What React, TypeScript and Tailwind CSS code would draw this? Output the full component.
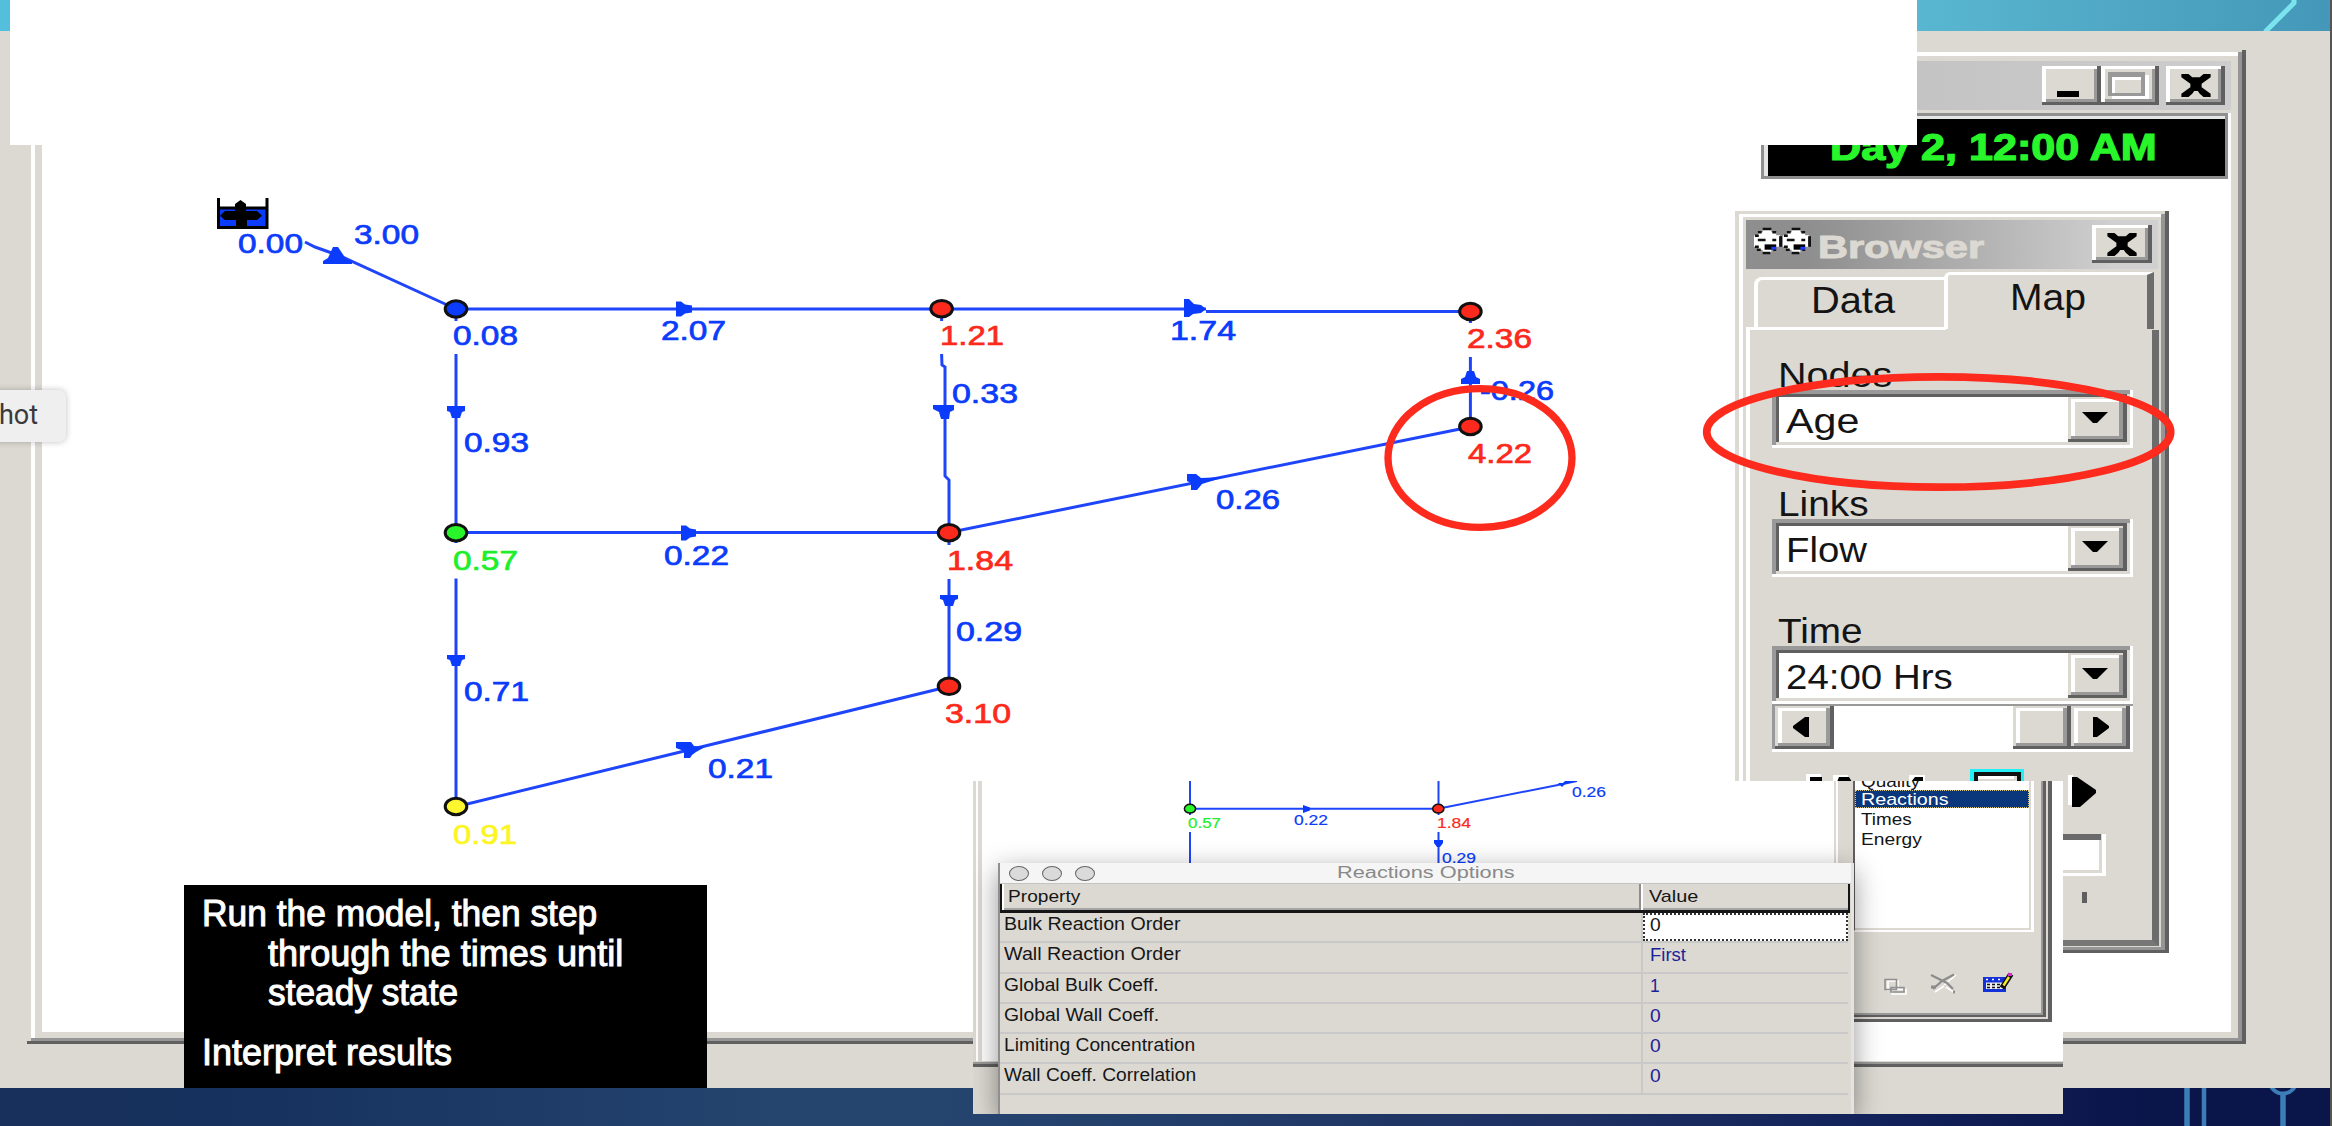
import { useLayoutEffect, useRef, type ReactNode } from "react";

/* One line of text, squeezed or stretched to a set width. */
function Fit({ w, className = "", children }: { w: number; className?: string; children: ReactNode }) {
  const ref = useRef<HTMLSpanElement>(null);
  useLayoutEffect(() => {
    const el = ref.current;
    if (el && el.offsetWidth) el.style.transform = `scaleX(${w / el.offsetWidth})`;
  }, [w]);
  return (
    <span ref={ref} className={`block w-max origin-top-left whitespace-pre leading-none ${className}`}>
      {children}
    </span>
  );
}

const RAISED =
  "bg-[#dcd9d2] shadow-[inset_-4px_-3px_0_#606060,inset_4px_3px_0_#ffffff,inset_-7px_-6px_0_#999999]";
const RAISED_BTN =
  "bg-[#dcd9d2] shadow-[inset_-4px_-3px_0_#606060,inset_3px_2px_0_#dcd9d2,inset_-8px_-6px_0_#999999,inset_7px_5px_0_#ffffff]";

function CloseGlyph() {
  return (
    <svg className="h-[23px] w-[30px]" viewBox="0 0 8 7" preserveAspectRatio="none">
      <path
        d="M0.100 0H2L3 1H5L6 0H7.900V1L6.700 2L5.500 3V4L6.700 5L7.900 6V7H6L5 6L4.500 5.200H3.500L3 6L2 7H0.100V6L1.300 5L2.500 4V3L1.300 2L0.100 1Z"
        fill="#000"
      />
    </svg>
  );
}

const BLUE = "#0b3bfb";
const RED = "#fb2a1c";

type Lbl = [string, number, number, number, string];
function Labels({ items, size, sw }: { items: Lbl[]; size: number; sw: number }) {
  return (
    <g fontFamily='"Liberation Sans", sans-serif' fontSize={size}>
      {items.map(([t, x, y, w, c], i) => (
        <text key={i} x={x} y={y} textLength={w} lengthAdjust="spacingAndGlyphs" fill={c} stroke={c} strokeWidth={sw}>
          {t}
        </text>
      ))}
    </g>
  );
}

function NodeDot({ x, y, c }: { x: number; y: number; c: string }) {
  return <ellipse cx={x} cy={y} rx={10.8} ry={8.2} fill={c} stroke="#111" strokeWidth={3} />;
}

const MAP_LABELS: Lbl[] = [
  ["0.00", 238, 252.5, 65, BLUE],
  ["3.00", 354, 244, 65, BLUE],
  ["0.08", 453, 345.2, 65, BLUE],
  ["2.07", 661, 339.7, 65, BLUE],
  ["1.21", 940, 345.2, 64, RED],
  ["1.74", 1170, 339.7, 66, BLUE],
  ["2.36", 1467, 347.8, 65, RED],
  ["0.93", 464, 451.8, 65, BLUE],
  ["0.33", 952, 402.8, 66, BLUE],
  ["-0.26", 1480, 399.8, 74, BLUE],
  ["4.22", 1468, 463, 64, RED],
  ["0.26", 1216, 509.3, 64, BLUE],
  ["0.57", 453, 569.5, 65, "#1fee2b"],
  ["0.22", 664, 564.5, 65, BLUE],
  ["1.84", 947, 569.5, 66, RED],
  ["0.71", 464, 701.3, 65, BLUE],
  ["0.29", 956, 640.5, 66, BLUE],
  ["3.10", 945, 723, 66, RED],
  ["0.21", 708, 778, 65, BLUE],
  ["0.91", 453, 843.5, 64, "#fdf51f"],
];

function NetworkMap() {
  return (
    <svg className="block h-[922px] w-[2189px]" viewBox="42 110 2189 922">
      <g stroke="#1f45fb" strokeWidth={3} fill="none">
        <path d="M305 242l10 5l25 9L456 309" />
        <path d="M456 309H1206M1206 311.6H1470" />
        <path d="M456 532.500H949L1470 427M949 686.5L456 806.7" />
        <path d="M456 309V321M456 354V543M456 578.5V806M941.6 309V321M941.6 354L942 365L945 367V476L949 480V545M949 579V686" />
        <path d="M1470.4 311V323M1470.4 357V427" />
      </g>
      <g fill={BLUE}>
        <path d="M333 247h5l8 12l6 2v3h-29v-3l5-3z" />
        <path d="M676 301.5h5l4 3l7 1v7l-7 1l-4 3h-5z" />
        <path d="M1184 299h5l5 5l7 1l5 4l-5 4l-8 1l-4 3h-5z" />
        <path d="M681 525.5h5l4 3l6 1v7l-6 1l-4 3h-5z" />
        <path d="M447 406h18v5l-3 1l-2 6h-8l-2-6l-3-1z" />
        <path d="M447 655h18v4l-3 1l-2 6h-8l-2-6l-3-1z" />
        <path d="M933 405h21v5l-4 2l-1 7h-8l-2-7l-6-3z" />
        <path d="M940 595h18v4l-3 1l-2 6h-8l-2-6l-3-1z" />
        <path d="M1461 384h19v-5l-4-2l-2-6h-7l-2 6l-4 2z" />
        <path d="M1187 474h9l5 4l23-1l-22 7l-5 6h-6v-7l-4-2z" />
        <path d="M676 742h15l3 4l11 1l-9 5l-4 3l-2 3h-6v-7l-8-3z" />
      </g>
      <g>
        <rect x={219} y={207} width={48} height={20} fill={BLUE} />
        <path d="M218.5 198V227.5H267V198M218 208H267" fill="none" stroke="#000" strokeWidth={3} />
        <path d="M236 227V220H225L220 215.7L225 211H235V204L240.5 200L246 204V211H257L262 215.7L257 220H247V227Z" fill="#000" />
      </g>
      <NodeDot x={456} y={309} c={BLUE} />
      <NodeDot x={941.6} y={308.7} c={RED} />
      <NodeDot x={1470.4} y={311.5} c={RED} />
      <NodeDot x={1470.4} y={426.5} c={RED} />
      <NodeDot x={949} y={532.7} c={RED} />
      <NodeDot x={949} y={686.3} c={RED} />
      <NodeDot x={456} y={532.7} c="#28f52a" />
      <NodeDot x={456} y={806.5} c="#fdf72f" />
      <Labels items={MAP_LABELS} size={27} sw={0.7} />
    </svg>
  );
}

function AppWindow() {
  return (
    <section className="absolute left-[27px] top-[50px] flex h-[994px] w-[2219px] flex-col bg-[#dcd9d2] pb-[12px] pl-[15px] pr-[15px] pt-[11px] shadow-[inset_-4px_-3px_0_#606060,inset_4px_2px_0_#dcd9d2,inset_-8px_-6px_0_#959595,inset_8px_6px_0_#ffffff]">
      <header className="flex h-[49px] shrink-0 items-start justify-end bg-gradient-to-r from-[#8e8e8e] to-[#cdcdcd] pr-[6px] pt-[5px]">
        <div className={`flex h-[39px] w-[59px] items-start pl-[15px] pt-[25px] ${RAISED}`}>
          <div className="h-[6px] w-[22px] bg-black" />
        </div>
        <div className={`flex h-[39px] w-[58px] items-start pl-[7px] pt-[6px] ${RAISED}`}>
          <div className="h-[24px] w-[37px] border-[4px] border-b-[3px] border-t-[5px] border-[#999] shadow-[inset_3px_3px_0_#fff,4px_3px_0_#fff]" />
        </div>
        <div className={`ml-[7px] flex h-[39px] w-[59px] items-start pl-[15px] pt-[8px] ${RAISED}`}>
          <CloseGlyph />
        </div>
      </header>
      <div className="h-[922px] bg-white">
        <NetworkMap />
      </div>
      <div className="absolute left-[1734px] top-[60px] h-[3px] w-[470px] bg-[#dcd9d2]" />
      <div className="absolute left-[1734px] top-[63px] h-[66px] w-[467px] border-[3px] border-[#8f8f8f] bg-[#e4e6e6] pl-[4px] pt-[3px]">
        <div className="h-full bg-black pl-[62px] pt-[11px]">
          <Fit w={327} className="font-['Liberation_Sans'] text-[36px] font-bold text-[#28f52a] [-webkit-text-stroke:1.2px_#28f52a]">
            Day 2, 12:00 AM
          </Fit>
        </div>
      </div>
    </section>
  );
}

function Eye() {
  return (
    <svg className="h-[28px] w-[29px]" viewBox="0 0 30 28">
      <path d="M10 2h9v3h5v3h4v12h-4v3h-5v3h-9v-3h-5v-3h-4v-12h4v-3h5z" fill="#fff" />
      <path d="M10 1.5h9M10 26.5h8M5 5h4M20 5h4M2 8.500h4M2 20h4M4 23h4M21 23h3" stroke="#111" strokeWidth={2.6} />
      <path d="M28.500 9v11" stroke="#111" strokeWidth={3} />
      <path d="M5 13h8M20 13h4" stroke="#111" strokeWidth={2.6} />
      <path d="M12 17.500h12v5.500h-12z" fill="#000" />
      <path d="M19 20h5v3h-5z" fill="#1d3cff" />
    </svg>
  );
}

function Combo({ label, lw, value, vw }: { label: string; lw: number; value: string; vw: number }) {
  return (
    <div className="flex h-[128.5px] flex-col">
      <div className="h-[33px] pl-[6px]">
        <Fit w={lw} className="text-[35px]">{label}</Fit>
      </div>
      <div className="flex h-[58px] w-[361px] justify-end bg-white py-[7px] pl-[7px] pr-[6px] shadow-[inset_-3px_-3px_0_#fff,inset_0_4px_0_#999,inset_4px_0_0_#999,inset_-6px_-6px_0_#dcd9d2,inset_0_7px_0_#606060,inset_7px_0_0_#606060]">
        <div className="flex-1 pl-[7px] pt-[6px]">
          <Fit w={vw} className="text-[35px]">{value}</Fit>
        </div>
        <div className={`flex h-[45px] w-[59px] items-start pl-[14px] pt-[15px] ${RAISED_BTN}`}>
          <svg className="h-[12px] w-[26px]" viewBox="0 0 26 12">
            <path d="M0 0H26L15 11H11Z" fill="#000" />
          </svg>
        </div>
      </div>
    </div>
  );
}

function Browser() {
  return (
    <section className="absolute left-[1735px] top-[211px] flex h-[742px] w-[434px] flex-col bg-[#dcd9d2] px-[11px] pt-[9px] font-['Liberation_Sans'] text-[#141414] shadow-[inset_-4px_-3px_0_#606060,inset_4px_3px_0_#dcd9d2,inset_-8px_-6px_0_#959595,inset_8px_6px_0_#ffffff]">
      <header className="flex h-[49px] w-[412px] shrink-0 items-start bg-gradient-to-r from-[#8e8e8e] from-15% to-[#d0d0d0] to-90% pl-[7px] pt-[7px]">
        <Eye />
        <Eye />
        <div className="flex-1 pl-[7px] pt-[5px]">
          <Fit w={166} className="text-[31px] font-bold text-[#dcd9d2] [-webkit-text-stroke:1px_#dcd9d2]">Browser</Fit>
        </div>
        <div className={`-mt-[2px] mr-[6px] flex h-[38px] w-[60px] items-start pl-[15px] pt-[8px] ${RAISED}`}>
          <CloseGlyph />
        </div>
      </header>
      <div className="flex h-[60px] shrink-0 items-end">
        <div className="ml-[8px] flex h-[52px] w-[190px] rounded-tl-[8px] border-l-[4px] border-t-[3px] border-white pl-[53px] pt-[3px]">
          <Fit w={84} className="text-[36px]">Data</Fit>
        </div>
        <div className="flex h-[57px] w-[210px] rounded-tl-[6px] border-l-[4px] border-r-[7px] border-t-[3px] border-l-white border-r-[#6c6c6c] border-t-white pl-[62px] pt-[5px]">
          <Fit w={76} className="text-[36px]">Map</Fit>
        </div>
      </div>
      <div className="-mt-[2px] flex h-[3px] shrink-0">
        <div className="w-[200px] bg-white" />
      </div>
      <div className="h-[616px] w-[413px] border-b-[6px] border-l-[4px] border-r-[7px] border-b-[#777] border-l-white border-r-[#6c6c6c] pl-[22px] pt-[27px]">
        <Combo label="Nodes" lw={114} value="Age" vw={73} />
        <Combo label="Links" lw={91} value="Flow" vw={81} />
        <div className="-mt-px">
          <Combo label="Time" lw={84} value="24:00 Hrs" vw={167} />
        </div>
        <div className="-mt-[39px] flex h-[49px] w-[361px] border-b-[3px] border-t-[3px] border-b-white border-t-[#999] bg-white">
          <div className="w-[3px] bg-[#999]" />
          <div className={`flex h-[43px] w-[59px] items-start pl-[18px] pt-[11px] ${RAISED_BTN}`}>
            <svg className="h-[20px] w-[16px]" viewBox="0 0 16 20"><path d="M16 0V20H12L0 11V9L12 0Z" /></svg>
          </div>
          <div className="w-[179px]" />
          <div className={`h-[43px] w-[58px] ${RAISED_BTN}`} />
          <div className={`flex h-[43px] w-[59px] items-start pl-[22px] pt-[11px] ${RAISED_BTN}`}>
            <svg className="h-[20px] w-[16px]" viewBox="0 0 16 20"><path d="M0 0V20H4L16 11V9L4 0Z" /></svg>
          </div>
        </div>
        <svg className="mt-[16px] block h-[150px] w-[361px]" viewBox="1771 769 361 150">
          <path d="M1805 775h15v8h-15zM1832 776h15v8h-15zM1908 776h16v8h-16z" fill="#fff" />
          <path d="M1809 778h12v5h-12zM1838 778h10l3 5h-15zM1914 778h8v5h-12z" fill="#000" />
          <path d="M1969 770h54v14h-54z" fill="#23eff5" />
          <path d="M1973 773h47v11h-47z" fill="#111" />
          <path d="M1977 777h39v8h-39z" fill="#dcd9d2" />
          <path d="M1977 777h36v3h-36z" fill="#fff" />
          <path d="M2067 776h5v30h-5z" fill="#fff" />
          <path d="M2071 778h5l19 13v3l-16 14h-8z" fill="#000" />
          <path d="M2000 835h100v6h-100z" fill="#6a6a6a" />
          <path d="M2000 841h98v30h-98z" fill="#fff" />
          <path d="M2101 835h4v42h-105v-3h101z" fill="#fff" />
          <path d="M2081 893h5v11h-5z" fill="#606060" />
        </svg>
      </div>
    </section>
  );
}

const ROWS: [string, number, string, number][] = [
  ["Bulk Reaction Order", 177, "0", 11],
  ["Wall Reaction Order", 177, "First", 36],
  ["Global Bulk Coeff.", 155, "1", 10],
  ["Global Wall Coeff.", 155, "0", 11],
  ["Limiting Concentration", 191, "0", 11],
  ["Wall Coeff. Correlation", 192, "0", 11],
];

function ReactionsDialog() {
  return (
    <div className="absolute left-[25px] top-[82px] h-[251px] w-[856px] border-l-[2px] border-r-[3px] border-l-[#8f8f8f] border-r-[#e4e3e0] bg-[#dcd9d2] shadow-[0_8px_26px_rgba(0,0,0,0.42)]">
      <header className="flex h-[21px] items-center border-b border-[#c4c4c4] bg-[#f5f5f5] pl-[9px] font-['Liberation_Sans']">
        <div className="flex w-[88px] gap-[13px]">
          {[0, 1, 2].map((i) => (
            <i key={i} className="h-[15px] w-[20px] shrink-0 rounded-[50%] border-[1.5px] border-[#666] bg-[#dadada]" />
          ))}
        </div>
        <div className="ml-[240px]">
          <Fit w={178} className="text-[16px] text-[#898989]">Reactions Options</Fit>
        </div>
      </header>
      <div className="mr-px flex h-[29px] border-b-[3px] border-l-2 border-r-2 border-[#151515] shadow-[inset_0_-2px_0_#a5a5a5]">
        <div className="w-[639px] border-l-2 border-r-2 border-l-white border-r-[#8e8e8e] pl-[4px] pt-[4px]">
          <Fit w={72} className="text-[17px] text-[#161616]">Property</Fit>
        </div>
        <div className="flex-1 border-l-2 border-white pl-[6px] pt-[4px]">
          <Fit w={49} className="text-[17px] text-[#161616]">Value</Fit>
        </div>
      </div>
      {ROWS.map(([p, pw, v, vw], i) => (
        <div key={p} className="mr-[3px] flex h-[30.3px] border-b-2 border-[#c9c9c9]">
          <div className="w-[643px] border-r-2 border-[#c9c9c9] pl-[4px] pt-[3px]">
            <Fit w={pw} className="text-[17.5px] text-[#161616]">{p}</Fit>
          </div>
          <div className={i === 0 ? "flex-1 border-[2px] border-dotted border-[#333] bg-white pl-[5px] pt-[2px]" : "flex-1 pl-[7px] pt-[4px]"}>
            <Fit w={vw} className={i === 0 ? "text-[17.5px] text-[#161616]" : "text-[17.5px] text-[#1b2298]"}>{v}</Fit>
          </div>
        </div>
      ))}
    </div>
  );
}

const INSET_LABELS: Lbl[] = [
  ["0.57", 1188, 828, 33, "#1fee2b"],
  ["0.22", 1294, 825, 34, BLUE],
  ["1.84", 1437, 828, 34, RED],
  ["0.29", 1442, 863, 34, BLUE],
  ["0.26", 1572, 797, 34, BLUE],
];

function Inset() {
  return (
    <section className="absolute left-[973px] top-[781px] h-[333px] w-[1090px] overflow-hidden bg-[#dcd9d2] font-['Liberation_Sans']">
      <div className="absolute left-0 top-0 h-[286px] w-[1090px] border-b-[3px] border-[#606060] bg-[#dcd9d2] pb-[3px] shadow-[inset_0_-2px_0_#999]">
        <div className="flex h-full">
          <div className="w-[3px] bg-[#dcd9d2]" />
          <div className="w-[2px] bg-white" />
          <div className="w-[4px] bg-[#dcd9d2]" />
          <div className="flex-1 bg-white" />
        </div>
      </div>
      <svg className="absolute left-0 top-0 h-[85px] w-[860px]" viewBox="973 781 860 85">
        <path
          d="M1190 781V815M1190 832V866M1438.5 781V815M1438.5 832V866M1190 808.700H1438L1563 784L1577 781"
          fill="none"
          stroke="#1f45fb"
          strokeWidth={2}
        />
        <path d="M1303 805l7 2.500v3l-7 2.500zM1434 840h9v3l-3 4h-3l-3-4zM1558 783h5l2-2h12l-12 3l-3 3z" fill={BLUE} />
        <ellipse cx={1190} cy={808.7} rx={5.6} ry={4.4} fill="#28f52a" stroke="#111" strokeWidth={1.5} />
        <ellipse cx={1438.3} cy={808.7} rx={5.6} ry={4.4} fill={RED} stroke="#111" strokeWidth={1.5} />
        <Labels items={INSET_LABELS} size={15} sw={0.2} />
      </svg>
      <div className="absolute left-[861px] top-0 h-[241px] w-[218px] border-b-[3px] border-r-[4px] border-[#606060] bg-[#dcd9d2] shadow-[inset_2px_0_0_#dcd9d2,inset_4px_0_0_#fff,inset_-2px_-2px_0_#dcd9d2,inset_-5px_-4px_0_#606060,inset_-7px_-6px_0_#999]">
        <div className="ml-[19px] h-[151px] w-[181px] overflow-hidden border-b-2 border-l-2 border-r-[3px] border-b-white border-l-[#606060] border-r-white bg-white text-[17px] text-[#141414] shadow-[inset_-2px_-2px_0_#dcd9d2]">
          <div className="flex h-[9px] items-end pl-[6px]"><Fit w={59}>Quality</Fit></div>
          <div className="mr-[2px] h-[18px] border border-dotted border-[#d8c67a] bg-[#0a377c] pl-[5px] text-white"><Fit w={88}>Reactions</Fit></div>
          <div className="h-[19.500px] pl-[6px] pt-[3px]"><Fit w={51}>Times</Fit></div>
          <div className="pl-[6px] pt-[3px]"><Fit w={61}>Energy</Fit></div>
        </div>
        <svg className="ml-[44px] mt-[37px] block h-[28px] w-[150px]" viewBox="1879 970 150 28">
          <g fill="none" strokeWidth={1.6}>
            <path d="M1889 992V982h10v8M1893 990.500h14v4.500h-14z" stroke="#fff" />
            <path d="M1888 980.500h9.500v10h-11.500v-10zM1892 988.500h13v4.500h-13z" stroke="#909090" />
            <path d="M1936 993l9-6M1945 986l12-10M1947 988l9 6" stroke="#fff" />
            <path d="M1932 976l8 4l8 4l6 6M1955 975.500L1943 982l-9 8" stroke="#8c8c8c" strokeWidth={2.2} />
            <path d="M1932 988h5M1954 993h2" stroke="#8c8c8c" strokeWidth={3} />
          </g>
          <path d="M1984 978h23v15h-23z" fill="#1430d8" />
          <path d="M1987 983.500h17v6.500h-17z" fill="#eee" />
          <path d="M1988 985.500h15M1988 988.500h15" stroke="#111" strokeWidth={1.4} strokeDasharray="3 2" />
          <path d="M1987 980.500h17" stroke="#fff" strokeWidth={1.4} strokeDasharray="2 4" />
          <path d="M2003 989L2012 975" stroke="#111" strokeWidth={5.5} />
          <path d="M2004.500 986.500L2010 978" stroke="#f6ea2b" strokeWidth={2.4} />
          <path d="M2009 974h4v3h-4z" fill="#d52bd0" />
        </svg>
      </div>
      <ReactionsDialog />
    </section>
  );
}

function Note() {
  return (
    <div className="absolute left-[184px] top-[885px] h-[203px] w-[523px] bg-black pl-[18px] pt-[11px] font-['Liberation_Sans'] text-[36px] text-white [-webkit-text-stroke:1px_#fff]">
      <div className="h-[39.500px]"><Fit w={395}>Run the model, then step</Fit></div>
      <div className="h-[39.500px] pl-[66px]"><Fit w={355}>through the times until</Fit></div>
      <div className="h-[60px] pl-[66px]"><Fit w={190}>steady state</Fit></div>
      <Fit w={250}>Interpret results</Fit>
    </div>
  );
}

export default function App() {
  return (
    <main className="relative flex h-[1126px] w-[2332px] flex-col overflow-hidden">
      <div className="h-[31px] bg-gradient-to-r from-[#54bfdc] via-[#5cbbd4] via-80% to-[#4497b8]" />
      <div className="h-[1057px] bg-[#dcd9d2]" />
      <div className="h-[38px] bg-[linear-gradient(90deg,#17305c_0%,#17325f_12%,#25456f_34%,#24426d_45%,#1d3061_68%,#12225a_80%,#0a154a_92%,#0a154a_100%)]" />
      <svg className="absolute left-[2170px] top-0 h-[31px] w-[160px]" viewBox="2170 0 160 31">
        <path d="M2294 0V3L2265 32" fill="none" stroke="#7be3ee" strokeWidth={5} />
      </svg>
      <svg className="absolute left-[2170px] top-[1088px] h-[38px] w-[160px]" viewBox="2170 1088 160 38">
        <path d="M2187 1088V1126M2283 1094V1126" stroke="#3c7db8" strokeWidth={5.5} />
        <path d="M2204 1088V1126" stroke="#3c7db8" strokeWidth={4.5} />
        <circle cx={2283} cy={1080} r={13.5} fill="none" stroke="#3c7db8" strokeWidth={4} />
      </svg>
      <AppWindow />
      <Browser />
      <div className="absolute left-[10px] top-0 h-[145px] w-[1907px] bg-white" />
      <Note />
      <Inset />
      <svg className="absolute left-[1370px] top-[360px] h-[180px] w-[820px]" viewBox="1370 360 820 180">
        <ellipse cx={1480} cy={458} rx={92} ry={69.3} fill="none" stroke="#fc2b1d" strokeWidth={7.3} />
        <ellipse cx={1938.7} cy={432} rx={232} ry={55.2} fill="none" stroke="#fc2b1d" strokeWidth={7.7} />
      </svg>
      <div className="absolute -left-[20px] top-[390px] flex h-[52px] w-[86px] justify-end rounded-[7px] bg-[#efeff0] pr-[28px] pt-[12px] shadow-[0_0_6px_rgba(0,0,0,0.25)]">
        <span className="font-['Roboto'] text-[27px] leading-none text-[#3a3a3a]">hot</span>
      </div>
      <div className="absolute right-0 top-0 h-[1126px] w-[2px] bg-[#555]" />
    </main>
  );
}
